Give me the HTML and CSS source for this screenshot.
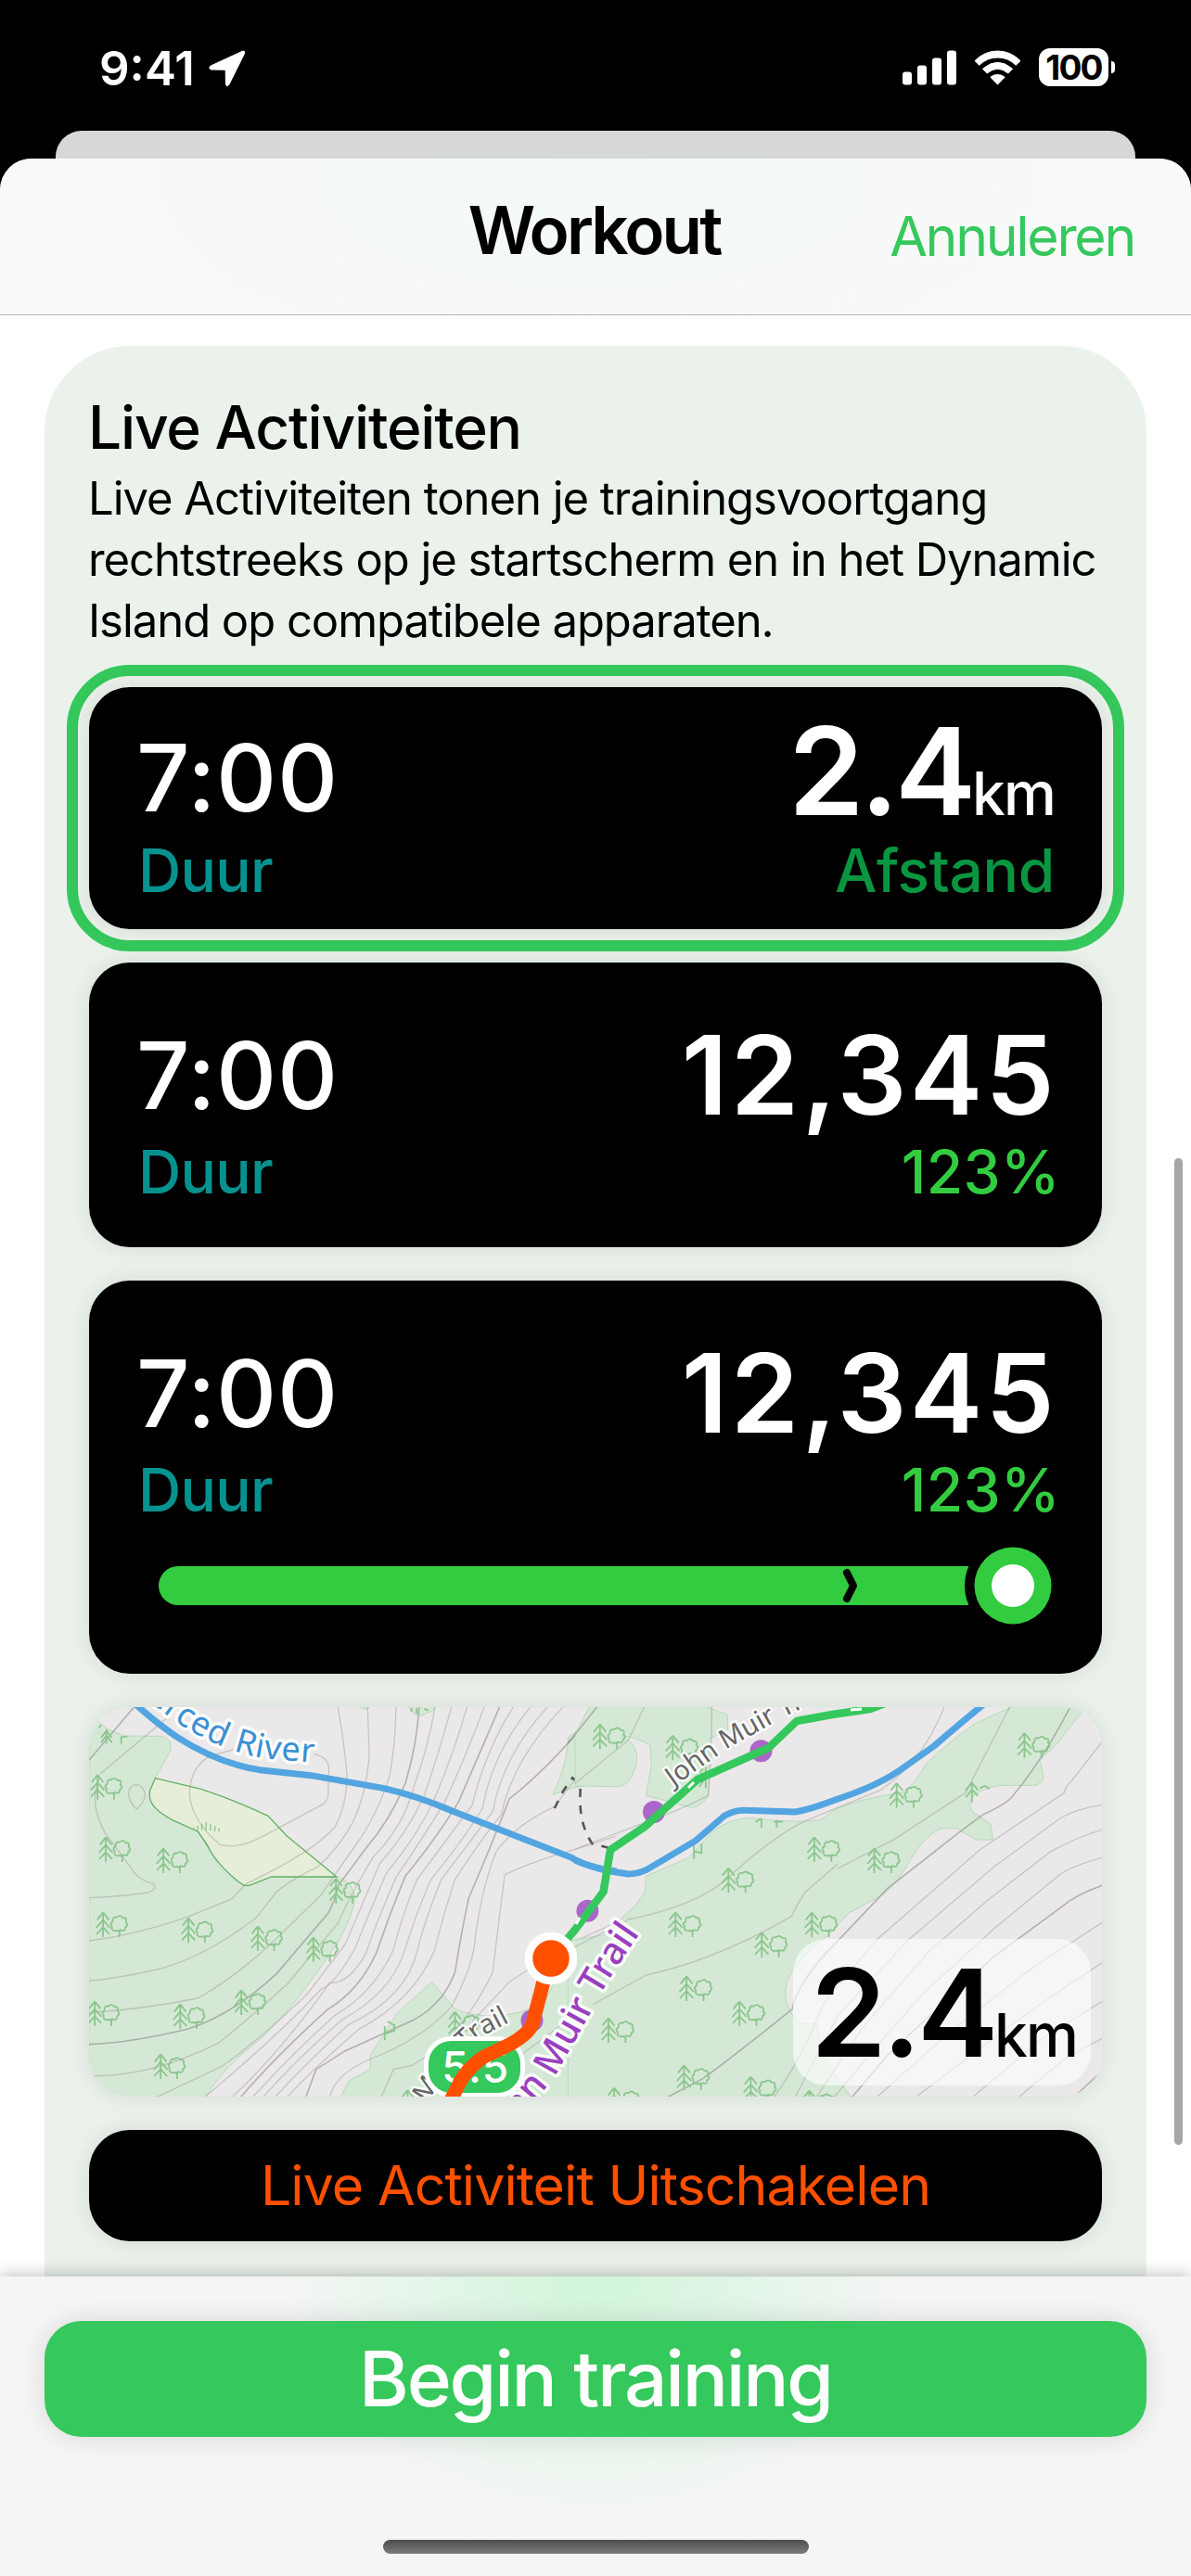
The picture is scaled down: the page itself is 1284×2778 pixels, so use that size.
FILE: index.html
```html
<!DOCTYPE html>
<html lang="nl">
<head>
    <meta charset="UTF-8">
    <meta name="viewport" content="width=device-width, initial-scale=1.0">
    <title>Workout</title>
    <link rel="stylesheet" href="styles.css">
</head>
<body>
    <div class="status-bar">
        <div class="status-left">
            <span class="time">9:41</span>
            <svg width="40" height="40" viewBox="0 0 40 40"><path d="M36.5 1.2 L1.8 17.2 Q-.6 19.6 2.4 21 L17.2 21.2 Q18.2 21.3 18.2 22.4 L18.4 37 Q19.4 40.2 21.8 37.4 L38.6 3.6 Q39.4 .4 36.5 1.2Z" fill="#fff" stroke="#fff" stroke-width="1"/></svg>
        </div>
        <div class="status-right">
            <svg width="58" height="38" viewBox="0 0 58 38" fill="#fff">
                <rect x="0" y="23.5" width="10" height="14" rx="3"/>
                <rect x="16" y="16.5" width="10" height="21" rx="3"/>
                <rect x="32" y="8.5" width="10" height="29" rx="3"/>
                <rect x="48" y="0.5" width="10" height="37" rx="3"/>
            </svg>
            <svg width="51" height="38" viewBox="0 0 51 38" fill="#fff">
                <path d="M25.5 37.5 L17.8 29.8 Q17.4 29 18.4 28.3 Q25.5 23.8 32.6 28.3 Q33.6 29 33.2 29.8Z"/>
                <path d="M9.500 20.2 Q25.5 6.5 41.5 20.2 L36.8 25 Q25.5 15.6 14.2 25Z" stroke="#fff" stroke-width="1" stroke-linejoin="round"/>
                <path d="M1 11.6 Q11.5 1 25.5 1 Q39.5 1 50 11.6 L45.2 16.3 Q37 8 25.5 8 Q14 8 5.8 16.3Z" stroke="#fff" stroke-width="1" stroke-linejoin="round"/>
            </svg>
            <div class="battery"><span class="battery-level">100</span></div>
        </div>
    </div>
    <div class="back-sheet"></div>

    <div class="sheet">
        <div class="header">
            <h1>Workout</h1>
            <a class="cancel">Annuleren</a>
        </div>

        <div class="content">
            <div class="panel">
                <h2>Live Activiteiten</h2>
                <p class="intro">Live Activiteiten tonen je trainingsvoortgang<br>rechtstreeks op je startscherm en in het Dynamic<br>Island op compatibele apparaten.</p>

                <div class="selected">
                    <div class="card card-small">
                        <div class="stats">
                            <div class="stat">
                                <div class="value">7:00</div>
                                <div class="label teal">Duur</div>
                            </div>
                            <div class="stat right">
                                <div class="value distance">2.4<span class="unit">km</span></div>
                                <div class="label dark-green">Afstand</div>
                            </div>
                        </div>
                    </div>
                </div>

                <div class="card card-medium">
                    <div class="stats">
                        <div class="stat">
                            <div class="value">7:00</div>
                            <div class="label teal">Duur</div>
                        </div>
                        <div class="stat right">
                            <div class="value steps">12,345</div>
                            <div class="label green">123%</div>
                        </div>
                    </div>
                </div>

                <div class="card card-large">
                    <div class="stats">
                        <div class="stat">
                            <div class="value">7:00</div>
                            <div class="label teal">Duur</div>
                        </div>
                        <div class="stat right">
                            <div class="value steps">12,345</div>
                            <div class="label green">123%</div>
                        </div>
                    </div>
                    <svg class="progress" width="966" height="84" viewBox="0 0 966 84">
                        <rect x="0" y="21" width="900" height="42" rx="21" fill="#33cc40"/>
                        <path d="M742 28 L749 42 L742 56" fill="none" stroke="#000" stroke-width="8" stroke-linecap="round" stroke-linejoin="round"/>
                        <circle cx="921" cy="42" r="52" fill="#000"/>
                        <circle cx="921" cy="42" r="41.5" fill="#33cc40"/>
                        <circle cx="921" cy="42" r="23" fill="#fff"/>
                    </svg>
                </div>

                <div class="map">
                    <svg width="1092" height="420" viewBox="0 0 1092 420">
                        <defs>
                            <g id="tree">
                                <path d="M22 82 V2 M22 2 L5 26 M22 2 L39 26 M22 27 L2 52 M22 27 L42 52 M22 50 L3 73 M22 50 L41 73"/>
                                <path d="M70 82 V57 M70 65 Q62 59 57 62 Q45 62 48 47 Q40 38 50 32 Q49 15 62 18 Q72 8 80 20 Q93 18 89 34 Q98 44 87 50 Q86 66 75 59 Q72 60 70 65"/>
                            </g>
                            <path id="river-name" d="M20 -50 C60 -6 100 25 143 42 S205 56 246 60"/>
                            <path id="trail-name" d="M630 86 L688 45 L745 13 L820 -24"/>
                            <path id="route-name" d="M410 510 Q472 436 502 399 L541 329 Q556 298 596 241"/>
                            <path id="side-name" d="M364 428 Q398 372 424 355 L466 333"/>
                        </defs>
                        <rect width="1092" height="420" fill="#ebe8e9"/>

                        <!-- western half -->
                        <g transform="matrix(.3699 0 0 .33333 -16 -21)">
                            <g class="wood">
                                <path d="M43 60 L62 98 Q90 140 150 156 L255 157 Q290 170 280 205 L236 293 L220 340 Q220 390 290 430 L360 465 L400 535 Q430 610 495 640 L575 610 L765 612 Q820 630 818 690 Q800 780 740 870 Q650 1020 550 1130 Q430 1230 380 1330 H43Z"/>
                                <path d="M1560 60 L1440 160 Q1440 240 1395 347 Q1440 325 1500 315 L1580 317 V60Z"/>
                                <path d="M1042 952 L940 1055 L863 1190 V1235 L800 1272 L775 1330 H1580 V810 L1460 815 L1370 1020 L1300 1050 Q1200 1080 1110 1040Z"/>
                                <path d="M975 60 Q985 90 1010 90 L1045 75 L1050 60Z M830 60 Q850 78 865 60Z"/>
                            </g>
                            <path d="M236 293 L370 328 Q470 365 565 415 L620 480 L765 612 H575 L510 640 H495 Q440 600 400 535 Q390 510 360 465 L290 430 Q220 390 220 350 V335Z" fill="#e6eed9" stroke="#5fb262" stroke-width="1.3"/>
                            <path d="M348 452 v9 M360 446 v16 M372 440 v22 M384 434 v28 M397 441 v21 M410 447 v18 M422 455 v11" stroke="#98c98d" stroke-width="1.5"/>
                            <g class="contour">
                                <path class="major" d="M43 235 L175 62"/>
                                <path d="M75 280 L270 98 M75 290 Q40 370 90 470 L180 605 Q200 625 230 635 Q245 650 215 663 Q140 675 43 680"/>
                                <path d="M182 314 Q160 315 158 345 Q165 380 182 393 Q203 375 207 345 Q200 315 182 314Z"/>
                                <path d="M700 215 Q740 225 742 260 L740 350 Q735 370 725 377 L560 475 Q480 525 425 508 Q340 430 336 340 Q340 250 400 220 L465 200"/>
                                <path d="M768 62 Q785 160 795 280 Q795 380 760 450 Q700 530 500 635 L460 683 L330 742 Q180 800 43 819"/>
                                <path d="M855 62 L860 220 Q850 350 810 440 Q770 520 710 580 Q640 615 590 660 L530 745 Q370 880 230 915 Q100 945 43 948"/>
                                <path d="M938 62 Q935 200 918 290 Q880 420 820 510 Q750 620 720 670 L600 800 Q480 930 360 1005 Q200 1040 43 1052"/>
                                <path class="major" d="M1005 62 Q1000 180 965 310 Q920 430 850 520 L770 640 Q760 690 740 730 L590 925 Q460 1060 330 1105 Q160 1150 43 1154"/>
                                <path d="M1052 62 Q1030 200 990 320 Q960 450 870 550 Q800 680 770 760 L620 960 Q500 1080 420 1150 Q220 1260 48 1256"/>
                                <path d="M1100 62 Q1060 220 1020 350 Q970 470 890 570 Q840 700 790 830 L680 990 Q540 1140 430 1225 L240 1325"/>
                                <path d="M1145 62 Q1110 200 1050 360 Q1000 480 910 600 Q870 700 820 840 Q760 960 720 975 Q600 1120 380 1325"/>
                                <path d="M1195 62 Q1150 200 1080 370 Q1020 480 940 610 Q880 760 850 860 Q800 960 745 955 Q600 1180 460 1325"/>
                                <path class="major" d="M1240 62 Q1170 240 1120 370 Q1060 480 965 610 Q920 730 880 860 Q830 980 740 1040 Q590 1190 485 1325"/>
                                <path d="M1280 62 Q1200 200 1160 380 Q1080 500 1000 620 Q960 720 930 850 Q870 990 760 1060 Q640 1180 520 1325"/>
                                <path d="M1330 62 Q1220 210 1190 390 Q1130 500 1040 620 Q1000 720 960 860 Q920 990 780 1075 Q650 1200 550 1325"/>
                                <path d="M1380 62 Q1250 220 1220 400 Q1160 490 1070 620 Q1020 760 1000 850 Q970 1000 800 1090 Q680 1210 585 1325"/>
                                <path d="M1425 62 Q1280 230 1245 410 Q1180 500 1110 620 Q1080 720 1050 850 Q990 1010 830 1105 Q700 1230 620 1325"/>
                                <path class="major" d="M1525 62 Q1420 220 1285 345 L1268 360 Q1220 500 1150 680 Q1130 780 1110 920 Q1070 1040 960 1090 L790 1175 L705 1235 L675 1325"/>
                                <path d="M1580 120 L1400 385 Q1290 440 1230 530 Q1190 640 1170 800 Q1165 900 1100 1030 Q1030 1120 900 1185 Q760 1240 745 1325"/>
                                <path d="M1580 480 L1470 520 Q1340 560 1255 605 Q1230 820 1220 920 Q1130 1130 985 1222 L930 1235 L895 1325"/>
                                <path d="M1580 760 L1440 830 L1270 950 L1160 1080 M1580 960 L1480 1040 L1300 1190"/>
                            </g>
                            <g class="trees">
                                <use href="#tree" x="46" y="280"/><use href="#tree" x="70" y="482"/><use href="#tree" x="238" y="518"/>
                                <use href="#tree" x="62" y="725"/><use href="#tree" x="311" y="744"/><use href="#tree" x="513" y="770"/>
                                <use href="#tree" x="38" y="1013"/><use href="#tree" x="287" y="1022"/><use href="#tree" x="465" y="977"/>
                                <use href="#tree" x="230" y="1184"/><use href="#tree" x="741" y="616"/><use href="#tree" x="675" y="806"/>
                                <use href="#tree" x="1088" y="1047"/><use href="#tree" x="950" y="1300"/><use href="#tree" x="1534" y="1067"/>
                                <path d="M94 182 V135 M94 140 L78 162 M94 140 L110 162 M94 155 L78 178 M94 155 L110 178 M137 182 V160 L155 158 M72 130 L80 120"/>
                                <path d="M983 66 v12 M998 66 v18 M1020 68 l12 6 M905 1095 v45 M905 1120 l28 -10 v-18 l-20 -12"/>
                            </g>
                            <path class="footpath" d="M1400 390 L1425 335 L1452 292 L1475 310 V340 Q1470 440 1510 505 L1570 522 L1535 650"/>
                            <path class="river" d="M175 50 Q240 115 300 160 Q420 245 540 266 L690 284 L900 325 Q1000 350 1100 398 L1300 485 L1450 550 Q1490 580 1580 594"/>
                        </g>

                        <!-- eastern half -->
                        <g transform="matrix(.38265 0 0 .33333 524 -21)">
                            <g class="wood">
                                <path d="M40 62 H370 L430 88 V135 L380 165 L375 350 Q350 395 320 386 L255 365 L200 350 L215 250 L212 185 Q170 160 130 155 Q185 190 172 250 Q155 315 125 320 L0 318 V150Z"/>
                                <path d="M1230 62 H1440 Q1390 130 1360 180 L1310 235 L1320 290 Q1315 315 1290 316 H1200 Q1130 325 1110 370 L1118 400 L1170 440 L1178 492 H1130 L1075 455 H1030 Q980 480 930 585 Q890 660 850 680 L770 730 Q720 800 660 850 L610 920 Q570 1000 620 1070 L640 1088 H680 Q690 1170 720 1230 L780 1330 H-20 V820 L80 800 L170 705 L197 660 L200 610 Q280 570 320 550 L380 475 Q430 420 500 422 Q620 440 690 428 L740 390 Q820 355 920 340 Q955 320 990 245 Q1080 150 1130 115Z"/>
                            </g>
                            <g class="contour">
                                <path class="major" d="M-20 180 L62 62"/>
                                <path d="M195 62 L150 170 L0 310 M0 522 L280 400 L375 350 Q385 240 385 62 M1040 62 Q980 240 860 332 L650 430 Q560 480 440 605 Q360 700 150 750 L-20 850"/>
                                <path d="M50 1025 L200 930 Q400 880 610 740 Q630 690 650 660 L740 570 M740 585 L900 490 L1100 340 L1225 62"/>
                                <path class="major" d="M1395 62 Q1320 230 1230 355 Q1210 380 1150 410 L1080 470 L880 650 L690 880 Q620 980 612 1040 Q450 1190 360 1265 L260 1325"/>
                                <path d="M1485 175 L1400 300 Q1380 320 1378 340 L1140 525 L850 815 L700 1020 Q640 1200 560 1325"/>
                                <path d="M1485 380 Q1420 390 1370 420 L1180 580 L940 815 L740 1060 L620 1325"/>
                                <path d="M1485 460 Q1420 480 1340 530 L1160 690 L1000 850 L810 1100 L680 1325"/>
                                <path d="M1485 550 Q1390 580 1360 610 L1180 780 L980 990 L850 1160 L730 1325"/>
                                <path class="major" d="M1485 640 Q1410 670 1370 710 L1180 870 L1000 1060 L880 1190 L780 1325"/>
                                <path d="M1485 760 L1290 905 L1060 1110 L850 1325 M1485 890 L1290 1040 L1080 1220 L960 1325 M1485 1015 L1310 1140 L1120 1325 M1485 1135 L1380 1200 L1250 1325"/>
                                <path class="major" d="M1480 1245 L1405 1325"/>
                            </g>
                            <g class="trees">
                                <use href="#tree" x="48" y="117"/><use href="#tree" x="253" y="153"/><use href="#tree" x="1244" y="145"/>
                                <use href="#tree" x="652" y="482"/><use href="#tree" x="821" y="518"/><use href="#tree" x="410" y="582"/>
                                <use href="#tree" x="261" y="725"/><use href="#tree" x="645" y="725"/><use href="#tree" x="504" y="790"/>
                                <use href="#tree" x="292" y="932"/><use href="#tree" x="441" y="1013"/><use href="#tree" x="72" y="1067"/>
                                <use href="#tree" x="285" y="1220"/><use href="#tree" x="473" y="1257"/><use href="#tree" x="88" y="1293"/>
                                <use href="#tree" x="638" y="1302"/><use href="#tree" x="884" y="307"/>
                                <path d="M1118 372 V308 L1100 332 M1118 308 L1135 332 M1118 330 L1100 355 M1118 330 L1135 350 M1140 325 L1155 318 L1168 328 M335 555 V500 M335 530 L356 535 V505 M368 325 V250 L352 275 M368 290 L350 320 M525 425 v28 M568 428 v24 M508 435 l17 -12 M585 434 h-25"/>
                            </g>
                            <path class="river" d="M0 558 Q60 590 150 603 Q175 603 200 590 L340 495 L420 415 Q450 395 480 397 L620 402 Q660 395 740 360 Q860 315 930 255 L1010 190 Q1080 120 1150 55"/>
                        </g>

                        <g fill="#ab66c9">
                            <circle cx="537.4" cy="219.7" r="12"/>
                            <circle cx="477.5" cy="338" r="12"/>
                            <circle cx="609" cy="113" r="12"/>
                            <circle cx="724.5" cy="47.3" r="12"/>
                        </g>

                        <text class="map-text river-text" text-anchor="end"><textPath href="#river-name" startOffset="99%">Merced River</textPath></text>
                        <text class="map-text path-text"><textPath href="#trail-name">John Muir Trail</textPath></text>
                        <text class="map-text path-text"><textPath href="#side-name">Muir Trail</textPath></text>
                        <text class="map-text route-text" text-anchor="end"><textPath href="#route-name" startOffset="99%">John Muir Trail</textPath></text>

                        <!-- route still to go, with direction marks -->
                        <path class="planned" d="M858 -4 L842 2 L801 8 L763 15 L732.500 44 L656 78 L599 129 L562 154 L554.600 199 L524 240 L502 266"/>
                        <path d="M821 3 L833 2 M646 87 L652 81 M525 234 L529 227" stroke="#fff" stroke-width="3"/>

                        <rect x="363.500" y="357.500" width="104" height="61" rx="27" fill="#35c85c" stroke="#fff" stroke-width="5"/>
                        <text class="badge-text" x="417" y="405" text-anchor="middle">5.5</text>
                        <path class="walked" d="M491 292 L478 342 Q474 352 455 363 L424 378 Q408 390 400 404 L388 428"/>
                        <circle cx="498" cy="271" r="24" fill="#ff5000" stroke="#fff" stroke-width="8.5"/>
                    </svg>
                    <div class="map-label">
                        <div class="value distance">2.4<span class="unit">km</span></div>
                    </div>
                </div>

                <button class="card disable">Live Activiteit Uitschakelen</button>
            </div>
            <div class="scrollbar"></div>
        </div>

        <div class="footer">
            <button class="start">Begin training</button>
            <div class="home-indicator"></div>
        </div>
    </div>
</body>
</html>
```
FILE: styles.css
```css
* {
    box-sizing: border-box;
}

body {
    margin: 0;
    width: 1284px;
    height: 2778px;
    display: flex;
    flex-direction: column;
    overflow: hidden;
    background: #000;
    font-family: Inter, "Liberation Sans", sans-serif;
}

button {
    border: none;
    font-family: inherit;
}

/* Status bar */
.status-bar {
    height: 141px;
    padding: 52px 82px 0 107px;
    display: flex;
    justify-content: space-between;
}
.status-left {
    display: flex;
    gap: 15px;
    height: 43px;
    align-items: center;
}
.time {
    color: #fff;
    font-size: 51px;
    font-weight: 600;
    line-height: 42px;
}
.status-right {
    display: flex;
    height: 41px;
    gap: 19px;
    align-items: center;
}
.battery {
    position: relative;
    width: 75px;
    height: 41px;
    border-radius: 12px;
    background: #fff;
    text-align: center;
    margin-right: 7px;
}
.battery::after {
    content: "";
    position: absolute;
    right: -7px;
    top: 14px;
    width: 4px;
    height: 13px;
    border-radius: 0 5px 5px 0;
    background: #fff;
}
.battery-level {
    font-size: 37px;
    font-weight: 700;
    line-height: 41px;
    letter-spacing: -1.8px;
}

/* Sheet */
.back-sheet {
    height: 30px;
    margin: 0 60px;
    border-radius: 28px 28px 0 0;
    background: #d6d8d5;
}
.sheet {
    flex: 1;
    display: flex;
    flex-direction: column;
    border-radius: 34px 34px 0 0;
    overflow: hidden;
    background: #fff;
}
.header {
    height: 169px;
    flex: none;
    display: grid;
    grid-template-columns: 1fr auto 1fr;
    border-bottom: 1px solid #b1b3b1;
    background: radial-gradient(ellipse 620px 260px at 50% 10%, #f3faf5, #f9f9f9);
}
.header h1 {
    grid-column: 2;
    margin: 0 3px 0 0;
    font-size: 71px;
    font-weight: 600;
    line-height: 154px;
    letter-spacing: -2.9px;
}
.cancel {
    justify-self: end;
    padding-right: 61px;
    color: #35c85c;
    font-size: 59px;
    line-height: 168px;
    letter-spacing: -2.3px;
}

.content {
    flex: 1;
    min-height: 0;
    position: relative;
    overflow: hidden;
    padding: 33px 48px 0;
}
.panel {
    height: 2200px;
    padding: 44px 48px 0;
    border-radius: 92px;
    background: #ebf2eb;
}
.panel h2 {
    margin: 0 0 0 -1px;
    font-size: 64px;
    font-weight: 500;
    line-height: 88px;
    letter-spacing: -1.2px;
}
.intro {
    margin: 0 -20px 14px -1px;
    font-size: 49px;
    line-height: 66px;
    letter-spacing: -1.04px;
    white-space: nowrap;
}
.scrollbar {
    position: absolute;
    top: 909px;
    right: 9px;
    width: 9px;
    height: 1064px;
    border-radius: 5px;
    background: #a6a6a6;
}

/* Cards */
.card {
    display: block;
    width: 1092px;
    margin-bottom: 36px;
    border-radius: 44px;
    background: #000;
    box-shadow: 0 0 24px rgba(0, 0, 0, 0.1);
}
.selected {
    margin: 0 -24px 12px;
    padding: 12px;
    border: 12px solid #35c85c;
    border-radius: 68px;
}
.selected .card {
    margin: 0;
}
.card-small {
    height: 261px;
    padding: 25px 51px 0 51px;
}
.card-medium {
    height: 307px;
    padding: 61px 48px 0 51px;
}
.card-large {
    height: 424px;
    padding: 61px 48px 0 51px;
}
.stats {
    display: flex;
    justify-content: space-between;
    align-items: flex-end;
}
.value {
    color: #fff;
    font-size: 101px;
    font-weight: 500;
    line-height: 120px;
    letter-spacing: 0.6px;
}
.card-medium .value,
.card-large .value {
    margin-bottom: 4px;
}
.right {
    text-align: right;
}
.distance {
    font-size: 131px;
    font-weight: 600;
    line-height: 132px;
    letter-spacing: -4.2px;
}
.steps {
    font-size: 118px;
    font-weight: 600;
    letter-spacing: 3.2px;
}
.unit {
    font-size: 64px;
    font-weight: 500;
    line-height: 0;
    letter-spacing: -1.8px;
}
.label {
    font-size: 64px;
    font-weight: 500;
    line-height: 82px;
}
.teal {
    margin-left: 2px;
    color: #07928f;
    letter-spacing: -0.7px;
}
.dark-green {
    color: #0a9541;
    letter-spacing: -0.3px;
}
.green {
    margin-right: -3px;
    color: #33cc40;
    letter-spacing: 0.4px;
}
.progress {
    display: block;
    margin: 20px 0 0 24px;
}

/* Map */
.map {
    position: relative;
    height: 420px;
    margin-bottom: 36px;
    border-radius: 44px;
    box-shadow: 0 0 24px rgba(0, 0, 0, 0.1);
    overflow: hidden;
}
.map svg {
    display: block;
}
.map path {
    vector-effect: non-scaling-stroke;
}
.wood {
    fill: #d5e8d6;
    stroke: #b5dab6;
    stroke-width: 1;
}
.contour {
    fill: none;
    stroke: rgba(150, 145, 140, 0.42);
    stroke-width: 1.3;
}
.major {
    stroke: rgba(130, 125, 122, 0.52);
    stroke-width: 1.6;
}
.trees {
    fill: none;
    stroke: #8bc68d;
    stroke-width: 1.8;
}
.river {
    fill: none;
    stroke: #52a5e0;
    stroke-width: 7;
}
.footpath {
    fill: none;
    stroke: #555;
    stroke-width: 2.6;
    stroke-dasharray: 9 9;
}
.planned {
    fill: none;
    stroke: #35c85c;
    stroke-width: 8.5;
    stroke-linejoin: round;
}
.walked {
    fill: none;
    stroke: #ff5000;
    stroke-width: 15;
    stroke-linejoin: round;
}
.map-text {
    font-family: "Noto Sans", sans-serif;
    paint-order: stroke;
    stroke: rgba(255, 255, 255, 0.85);
    stroke-width: 7px;
    stroke-linejoin: round;
}
.river-text {
    font-size: 36px;
    letter-spacing: 0.8px;
    fill: #3a90d2;
}
.path-text {
    font-size: 29px;
    fill: #666;
    stroke-width: 5px;
}
.route-text {
    font-size: 40px;
    font-weight: 500;
    fill: #9a3fbf;
}
.badge-text {
    font-size: 46px;
    font-weight: 500;
    fill: #fff;
    letter-spacing: 1.5px;
}
.map-label {
    position: absolute;
    right: 12px;
    bottom: 12px;
    width: 321px;
    height: 158px;
    padding-top: 14px;
    padding-right: 15px;
    border-radius: 36px;
    background: rgba(255, 255, 255, 0.6);
    text-align: right;
}
.map-label .value {
    color: #000;
}

.disable {
    height: 120px;
    margin: 0;
    padding: 0;
    color: #ff5000;
    font-size: 59px;
    line-height: 120px;
    letter-spacing: -0.93px;
}

/* Footer */
.footer {
    position: relative;
    height: 323px;
    flex: none;
    padding: 48px 48px 0;
    background:
        radial-gradient(ellipse 330px 260px at 50% 0, rgba(206, 246, 217, 0.95), rgba(206, 246, 217, 0)),
        #f4f5f4;
    box-shadow: 0 0 18px rgba(0, 0, 0, 0.3);
}
.start {
    display: block;
    width: 1188px;
    height: 125px;
    padding: 0;
    border-radius: 40px;
    background: #35c85c;
    box-shadow: 0 0 28px rgba(0, 0, 0, 0.12);
    color: #fff;
    font-size: 82px;
    font-weight: 500;
    line-height: 126px;
    letter-spacing: -2.25px;
}
.home-indicator {
    width: 459px;
    height: 15px;
    margin: 111px auto 0;
    border-radius: 8px;
    background: linear-gradient(#4c4e4c, #7b7d7b);
}
```
